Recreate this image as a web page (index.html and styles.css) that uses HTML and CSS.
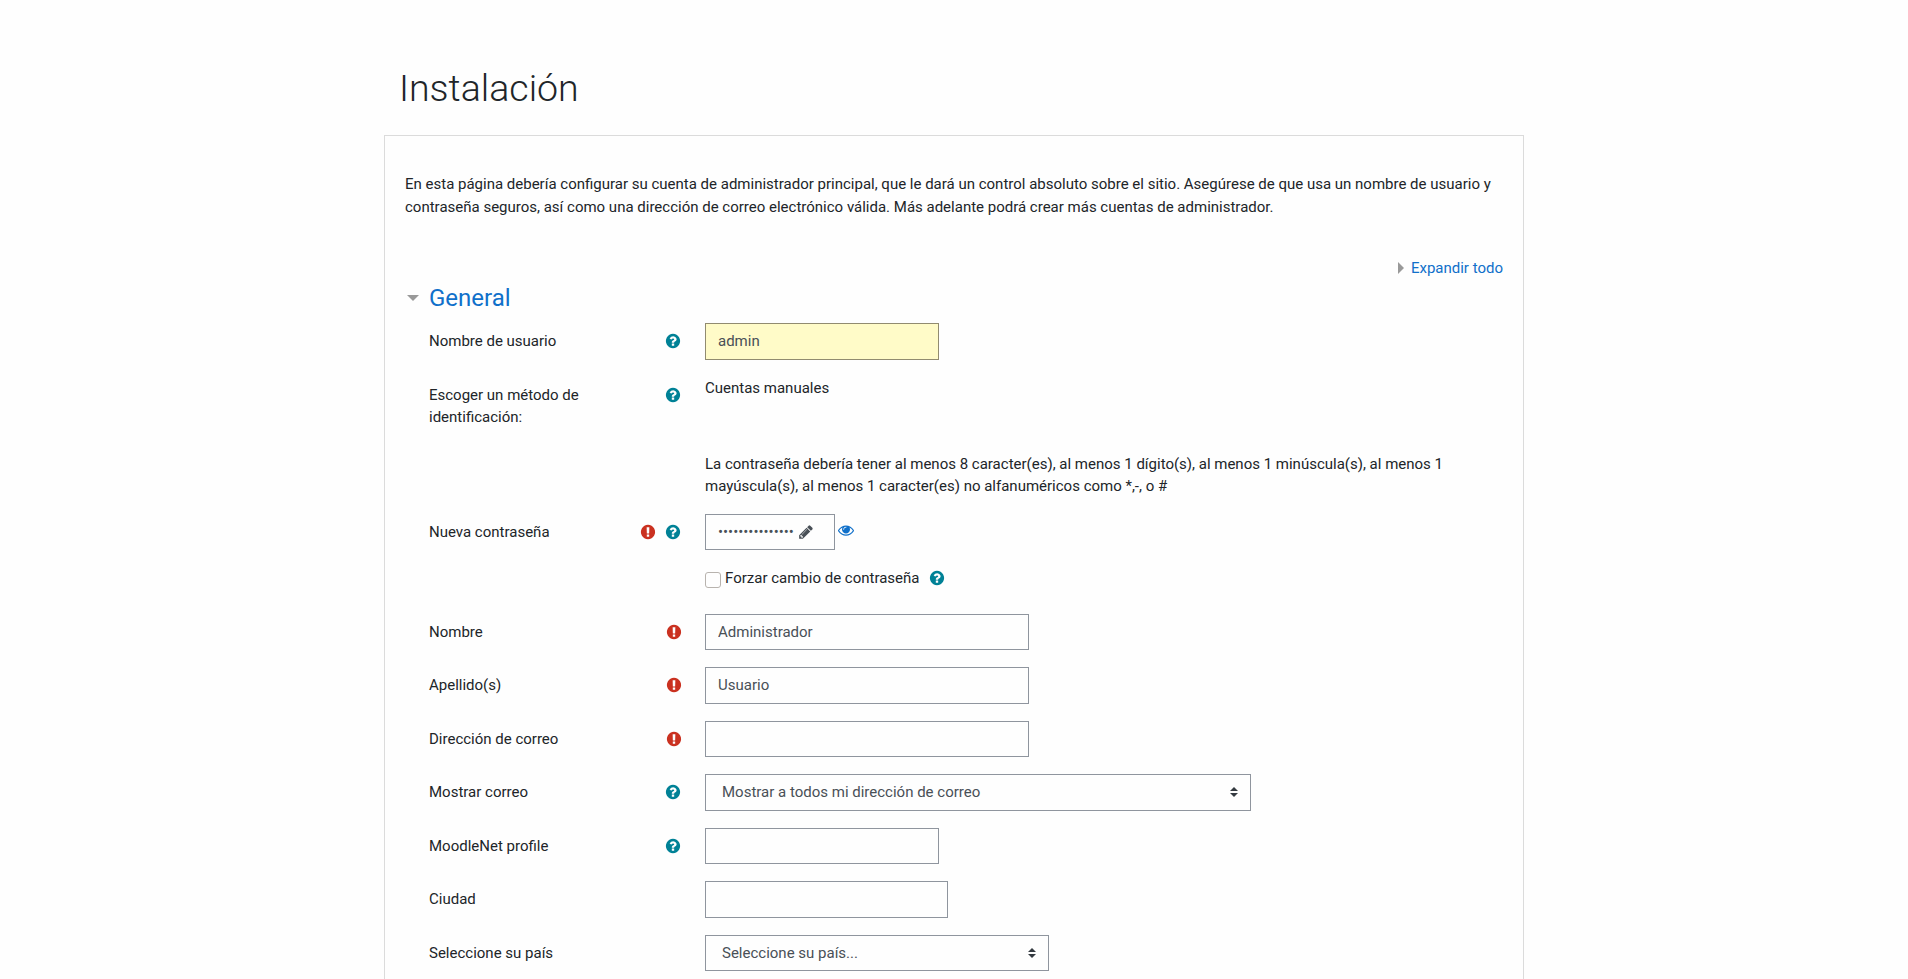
FILE: index.html
```html
<!DOCTYPE html>
<html lang="es">
<head>
<meta charset="utf-8">
<title>Instalación</title>
<link rel="stylesheet" href="styles.css">
</head>
<body>
<svg class="sprite" aria-hidden="true">
  <symbol id="help" viewBox="0 0 1792 1792"><path d="M1024 1376v-192q0-14-9-23t-23-9h-192q-14 0-23 9t-9 23v192q0 14 9 23t23 9h192q14 0 23-9t9-23zm256-672q0-88-55.5-163t-138.5-116-170-41q-243 0-371 213-15 24 8 42l132 100q7 6 19 6 16 0 25-12 53-68 86-92 34-24 86-24 48 0 85.5 26t37.5 59q0 38-20 61t-68 45q-63 28-115.5 86.5t-52.5 125.5v36q0 14 9 23t23 9h192q14 0 23-9t9-23q0-19 21.5-49.5t54.5-49.5q32-18 49-28.5t46-35 44.5-48 28-60.5 12.5-81zm384 192q0 209-103 385.5t-279.5 279.5-385.5 103-385.5-103-279.5-279.5-103-385.5 103-385.5 279.5-279.5 385.5-103 385.5 103 279.5 279.5 103 385.5z"/></symbol>
  <symbol id="required" viewBox="0 0 1792 1792"><path d="M896 128q209 0 385.5 103t279.5 279.5 103 385.5-103 385.5-279.5 279.5-385.5 103-385.5-103-279.5-279.5-103-385.5 103-385.5 279.5-279.5 385.5-103zm128 1247v-190q0-14-9-23.5t-22-9.5h-192q-13 0-23 10t-10 23v190q0 13 10 23t23 10h192q13 0 22-9.5t9-23.5zm-2-344l18-621q0-12-10-18-10-8-24-8h-220q-14 0-24 8-10 6-10 18l17 621q0 10 10 17.5t24 7.5h185q14 0 23.5-7.5t10.5-17.5z"/></symbol>
  <symbol id="eye" viewBox="0 0 1792 1792"><path d="M1664 960q-152-236-381-353 61 104 61 225 0 185-131.5 316.5t-316.5 131.5-316.5-131.5-131.5-316.5q0-121 61-225-229 117-381 353 133 205 333.5 326.5t434.5 121.5 434.5-121.5 333.5-326.5zm-720-384q0-20-14-34t-34-14q-125 0-214.5 89.5t-89.5 214.5q0 20 14 34t34 14 34-14 14-34q0-86 61-147t147-61q20 0 34-14t14-34zm848 384q0 34-20 69-140 230-376.5 368.5t-499.5 138.5-499.5-139-376.5-368q-20-35-20-69t20-69q140-229 376.5-368t499.5-139 499.5 139 376.5 368q20 35 20 69z"/></symbol>
  <symbol id="pencil" viewBox="0 0 1792 1792"><path d="M491 1536l91-91-235-235-91 91v107h128v128h107zm523-928q0-22-22-22-10 0-17 7l-542 542q-7 7-7 17 0 22 22 22 10 0 17-7l542-542q7-7 7-17zm-54-192l416 416-832 832h-416v-416zm683 96q0 53-37 90l-166 166-416-416 166-165q36-38 90-38 53 0 91 38l235 234q37 39 37 91z"/></symbol>
  <symbol id="sort" viewBox="0 0 4 5"><path d="M2 0L0 2h4zm0 5L0 3h4z"/></symbol>
</svg>
<div class="page">
  <h1 class="title">Instalación</h1>
  <main class="card">
    <p class="intro">En esta página debería configurar su cuenta de administrador principal, que le dará un control absoluto sobre el sitio. Asegúrese de que usa un nombre de usuario y contraseña seguros, así como una dirección de correo electrónico válida. Más adelante podrá crear más cuentas de administrador.</p>
    <div class="actions"><svg class="tri-right" viewBox="0 0 6 12"><path d="M0 0L6 6L0 12z"/></svg><a class="link">Expandir todo</a></div>
    <h2 class="legend"><svg class="tri-down" viewBox="0 0 12 6"><path d="M0 0H12L6 6z"/></svg><a class="link">General</a></h2>
    <form class="form">
      <div class="row">
        <div class="label"><label>Nombre de usuario</label><span class="addons"><svg class="icon help"><use href="#help"/></svg></span></div>
        <div class="field"><input class="control w-user filled" type="text" value="admin"></div>
      </div>
      <div class="row">
        <div class="label tall"><label>Escoger un método de identificación:</label><span class="addons"><svg class="icon help"><use href="#help"/></svg></span></div>
        <div class="field">Cuentas manuales</div>
      </div>
      <div class="row rules">
        <div class="label"></div>
        <div class="field">La contraseña debería tener al menos 8 caracter(es), al menos 1 dígito(s), al menos 1 minúscula(s), al menos 1 mayúscula(s), al menos 1 caracter(es) no alfanuméricos como *,-, o #</div>
      </div>
      <div class="row">
        <div class="label"><label>Nueva contraseña</label><span class="addons"><svg class="icon required"><use href="#required"/></svg><svg class="icon help"><use href="#help"/></svg></span></div>
        <div class="field inline"><a class="control w-pass"><span>•••••••••••••••</span><svg class="icon pencil"><use href="#pencil"/></svg></a><svg class="icon eye"><use href="#eye"/></svg></div>
      </div>
      <div class="row check-row">
        <div class="label"></div>
        <div class="field check"><span class="box"></span><label>Forzar cambio de contraseña</label><svg class="icon help"><use href="#help"/></svg></div>
      </div>
      <div class="row">
        <div class="label"><label>Nombre</label><span class="addons only-req"><svg class="icon required"><use href="#required"/></svg></span></div>
        <div class="field"><input class="control w-name" type="text" value="Administrador"></div>
      </div>
      <div class="row">
        <div class="label"><label>Apellido(s)</label><span class="addons only-req"><svg class="icon required"><use href="#required"/></svg></span></div>
        <div class="field"><input class="control w-name" type="text" value="Usuario"></div>
      </div>
      <div class="row">
        <div class="label"><label>Dirección de correo</label><span class="addons only-req"><svg class="icon required"><use href="#required"/></svg></span></div>
        <div class="field"><input class="control w-name" type="text"></div>
      </div>
      <div class="row">
        <div class="label"><label>Mostrar correo</label><span class="addons"><svg class="icon help"><use href="#help"/></svg></span></div>
        <div class="field"><div class="control select w-mail"><span>Mostrar a todos mi dirección de correo</span><svg class="sort"><use href="#sort"/></svg></div></div>
      </div>
      <div class="row">
        <div class="label"><label>MoodleNet profile</label><span class="addons"><svg class="icon help"><use href="#help"/></svg></span></div>
        <div class="field"><input class="control w-user" type="text"></div>
      </div>
      <div class="row">
        <div class="label"><label>Ciudad</label></div>
        <div class="field"><input class="control w-city" type="text"></div>
      </div>
      <div class="row">
        <div class="label"><label>Seleccione su país</label></div>
        <div class="field"><div class="control select w-country"><span>Seleccione su país...</span><svg class="sort"><use href="#sort"/></svg></div></div>
      </div>
    </form>
  </main>
</div>
</body>
</html>
```
FILE: styles.css
```css
* { box-sizing: border-box; }
body {
  margin: 0;
  background: #fefefe;
  color: #212529;
  font: 400 15px/22.5px Roboto, sans-serif;
}
.sprite { display: none; }
.page { width: 1140px; margin: 0 auto; padding-top: 66px; }
.title {
  margin: 0;
  padding-left: 15px;
  height: 69px;
  font-size: 37.5px;
  font-weight: 300;
  line-height: 45px;
}
.card {
  height: 844px;
  padding: 37px 20px 0;
  border: 1px solid #dbdbdb;
  border-bottom: 0;
  background: #fefefe;
}
.intro { margin: 0; }
.link { color: #1070ca; }
.actions {
  display: flex;
  align-items: center;
  justify-content: flex-end;
  gap: 7px;
  margin-top: 38.5px;
}
.tri-right { width: 6px; height: 12px; fill: #999; }
.tri-down { width: 12px; height: 6px; fill: #999; }
.legend {
  display: flex;
  align-items: center;
  gap: 10px;
  margin: 5px 0 0;
  padding-left: 2px;
  height: 28px;
  font-size: 24px;
  font-weight: 400;
  line-height: 28px;
}
.form {
  display: flex;
  flex-direction: column;
  gap: 17px;
  margin: 11px 0 0 24px;
}
.row { display: grid; grid-template-columns: 276px 753px; }
.rules { height: 44px; }
.label {
  display: flex;
  justify-content: space-between;
  align-items: flex-start;
  padding: 7px 24px 0 0;
}
.label.tall { padding-bottom: 7px; }
.label.tall label { width: 170px; }
.addons { display: flex; gap: 9px; padding-top: 3px; }
.only-req { margin-right: -1px; }
.icon { width: 16px; height: 16px; flex: none; }
.help { fill: #008196; }
.required { fill: #ca3120; }
.help, .required { transform: scale(1.04); }
.eye { fill: #1070ca; }
.pencil { fill: #495057; }
.inline { display: flex; align-items: center; gap: 3px; }
.eye { margin-top: -4px; }
.control {
  display: block;
  height: 36.5px;
  padding: 6px 12px;
  border: 1px solid #8f959e;
  border-radius: 0;
  background: #fefefe;
  color: #495057;
  font: inherit;
}
.filled { background: #fffbc8; border-color: #918b70; }
.w-user { width: 234px; }
.w-name { width: 324px; }
.w-city { width: 243px; }
.w-mail { width: 546px; }
.w-country { width: 344px; }
.w-pass { display: flex; align-items: center; gap: 4px; width: 130px; }
.select {
  display: flex;
  align-items: center;
  justify-content: space-between;
  padding-left: 16px;
}
.sort { width: 8px; height: 10px; fill: #343a40; }
.check-row { height: 29.5px; }
.check { display: flex; align-items: flex-start; }
.box {
  width: 16px;
  height: 16px;
  margin: 5px 4px 0 0;
  border: 1px solid #b8b3ae;
  border-radius: 3px;
  background: #fefefe;
}
.check .icon { margin: 3px 0 0 9px; }
```
